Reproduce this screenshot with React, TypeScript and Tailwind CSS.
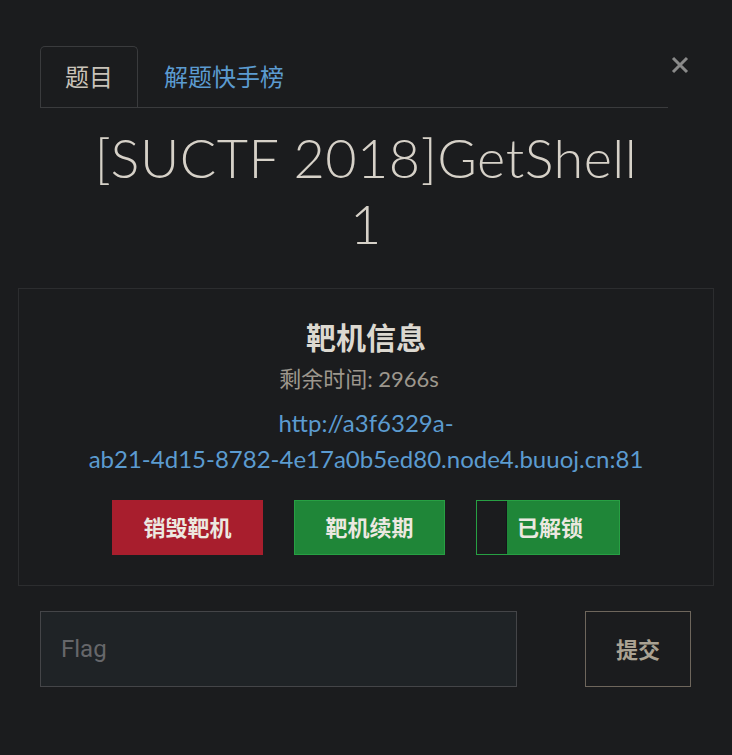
import React from 'react';

const cjk = "font-['Lato','Noto_Sans_CJK_SC',sans-serif]";

export default function App() {
  return (
    <div className={`w-[732px] h-[755px] bg-[#1b1c1e] overflow-hidden ${cjk}`}>
      {/* Header with tabs */}
      <div className="flex items-start pl-10 pr-[42px] pt-[46px]">
        <ul className="flex flex-1 border-b border-[#3a3b3d]">
          <li className="h-[61px] px-6 flex items-center border border-b-0 border-[#3a3b3d] rounded-t-[5px] text-[24px] text-[#c9c3b9] mb-[-1px] bg-[#1b1c1e]">
            题目
          </li>
          <li className="h-[61px] ml-[2px] px-6 flex items-center text-[24px] text-[#5b9bd0]">
            解题快手榜
          </li>
        </ul>
        <button className="w-[20px] mt-[10px] ml-[2px] text-[#8a8a8a] flex justify-center">
          <svg width="18" height="18" viewBox="0 0 18 18">
            <path d="M2 2 L16 16 M16 2 L2 16" stroke="currentColor" strokeWidth="3" />
          </svg>
        </button>
      </div>

      {/* Title */}
      <h1 className="mt-[17px] px-[80px] text-center text-[54px] leading-[66px] font-light text-[#d6d1c8] tracking-[0.5px]">
        [SUCTF 2018]GetShell 1
      </h1>

      {/* Target info */}
      <div className="mx-[18px] mt-[31px] border border-[#2c2d2f] pt-[28px] pb-[30px] flex flex-col items-center">
        <h3 className="text-[30px] leading-[40px] font-bold text-[#dcd8d0]">靶机信息</h3>
        <p className="mt-[7px] pr-[14px] text-[22px] leading-[30px] text-[#9d978d]">剩余时间: 2966s</p>
        <a className="mt-[11px] w-[600px] text-center text-[24px] leading-[36px] text-[#5b9bd0] break-all">
          http://a3f6329a-
          <br />
          ab21-4d15-8782-4e17a0b5ed80.node4.buuoj.cn:81
        </a>
        <div className="mt-[23px] flex gap-[31px]">
          <button className="w-[151px] h-[55px] bg-[#a81e2d] text-[22px] font-bold text-[#ece8e0]">销毁靶机</button>
          <button className="w-[151px] h-[55px] bg-[#1f8638] border border-[#27a043] text-[22px] font-bold text-[#ece8e0]">靶机续期</button>
          <button className="w-[144px] h-[55px] flex border border-[#27a043] text-[22px] font-bold text-[#ece8e0]">
            <span className="w-[30px] h-full bg-[#1b1c1e] border-r border-[#14151a]" />
            <span className="flex-1 h-full bg-[#1f8638] flex items-center justify-center pr-[26px]">已解锁</span>
          </button>
        </div>
      </div>

      {/* Flag submit */}
      <div className="flex items-center pl-10 pr-[41px] mt-[25px]">
        <input
          placeholder="Flag"
          className="w-[477px] h-[76px] bg-[#1f2326] border border-[#444548] px-5 text-[24px] font-['Roboto',sans-serif] text-[#ccc] placeholder:text-[#66676a] outline-none"
        />
        <div className="flex-1" />
        <button className="w-[106px] h-[76px] border border-[#6e665c] text-[22px] font-bold text-[#aaa293]">提交</button>
      </div>
    </div>
  );
}
